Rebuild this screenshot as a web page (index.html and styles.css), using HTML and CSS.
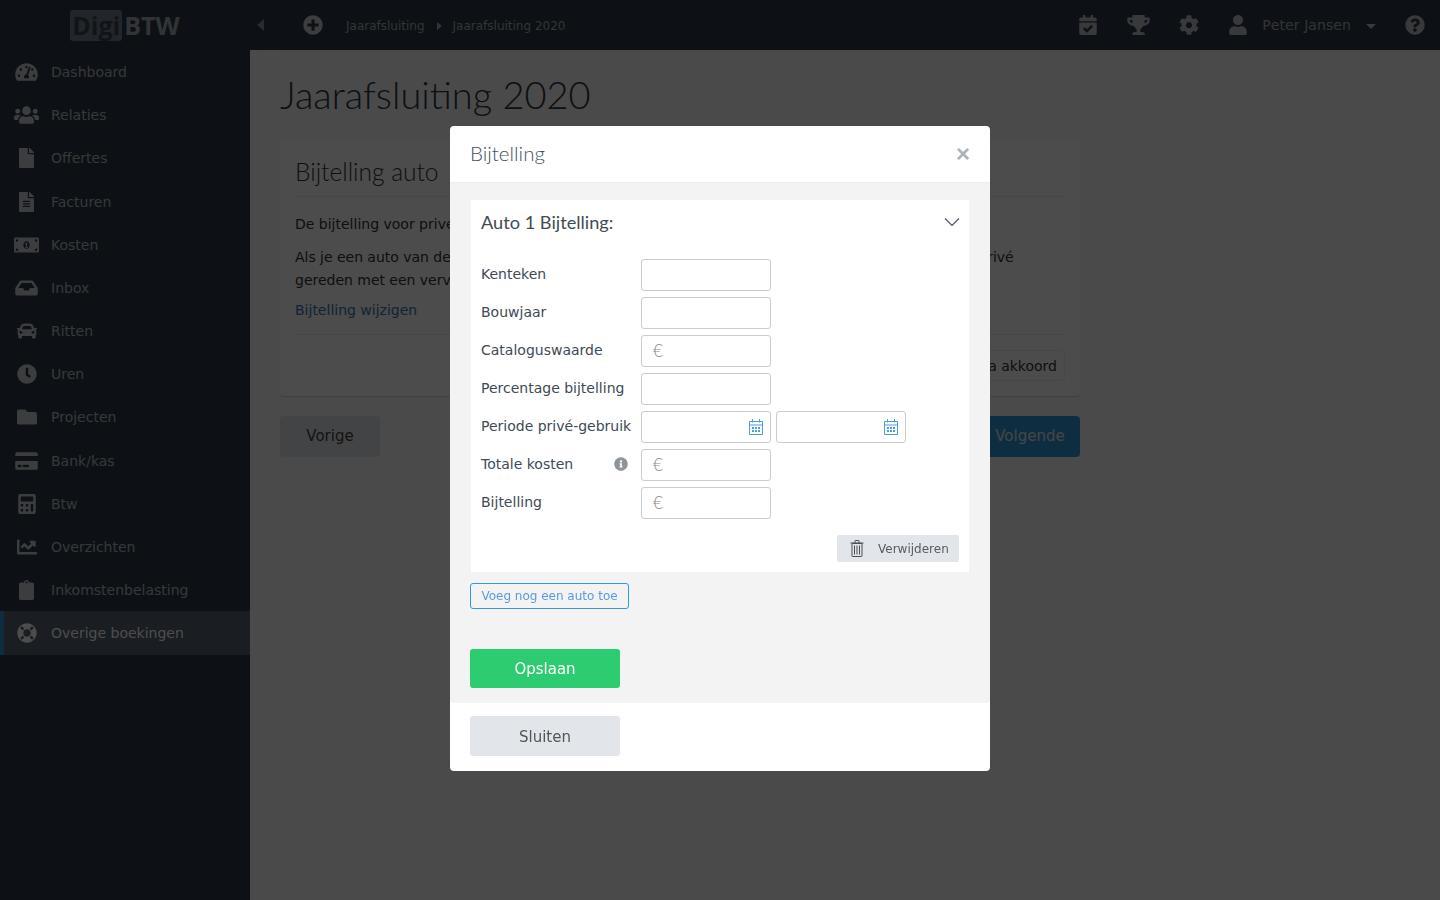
FILE: index.html
```
<!DOCTYPE html>
<html lang="nl">
<head>
<meta charset="utf-8">
<title>Jaarafsluiting 2020</title>
<link rel="stylesheet" href="styles.css">
</head>
<body>
<svg class="defs" width="0" height="0" aria-hidden="true">
<symbol id="i-tach" viewBox="0 0 576 512"><path d="M288 32C128.94 32 0 160.94 0 320c0 52.8 14.25 102.26 39.06 144.8 5.61 9.62 16.3 15.2 27.44 15.2h443c11.14 0 21.83-5.58 27.44-15.2C561.75 422.26 576 372.8 576 320c0-159.06-128.94-288-288-288zm0 64c14.71 0 26.58 10.13 30.32 23.65-1.11 2.26-2.64 4.23-3.45 6.67l-9.22 27.67c-5.13 3.49-10.97 6.01-17.64 6.01-17.67 0-32-14.33-32-32S270.33 96 288 96zM96 384c-17.67 0-32-14.33-32-32s14.33-32 32-32 32 14.33 32 32-14.33 32-32 32zm48-160c-17.67 0-32-14.33-32-32s14.33-32 32-32 32 14.33 32 32-14.33 32-32 32zm246.77-72.41l-61.33 184C343.13 347.33 352 364.54 352 384c0 11.72-3.38 22.55-8.88 32H232.88c-5.5-9.45-8.88-20.28-8.88-32 0-33.94 26.5-61.43 59.9-63.59l61.34-184.01c4.17-12.56 17.73-19.45 30.36-15.17 12.57 4.19 19.35 17.79 15.17 30.36zm14.66 57.2l15.52-46.55c3.47-1.29 7.13-2.23 11.05-2.23 17.67 0 32 14.33 32 32s-14.33 32-32 32c-11.38-.01-20.89-6.28-26.57-15.22zM480 384c-17.67 0-32-14.33-32-32s14.33-32 32-32 32 14.33 32 32-14.33 32-32 32z"/></symbol>
<symbol id="i-users" viewBox="0 0 640 512"><path d="M96 224c35.3 0 64-28.7 64-64s-28.7-64-64-64-64 28.7-64 64 28.7 64 64 64zm448 0c35.3 0 64-28.7 64-64s-28.7-64-64-64-64 28.7-64 64 28.7 64 64 64zm32 32h-64c-17.6 0-33.5 7.1-45.1 18.6 40.3 22.1 68.9 62 75.1 109.4h66c17.7 0 32-14.3 32-32v-32c0-35.3-28.7-64-64-64zm-256 0c61.9 0 112-50.1 112-112S381.9 32 320 32 208 82.1 208 144s50.1 112 112 112zm76.8 32h-8.3c-20.8 10-43.9 16-68.5 16s-47.6-6-68.5-16h-8.3C179.6 288 128 339.6 128 403.2V432c0 26.5 21.5 48 48 48h288c26.5 0 48-21.5 48-48v-28.8c0-63.6-51.6-115.2-115.2-115.2zm-223.7-13.4C161.5 263.1 145.6 256 128 256H64c-35.3 0-64 28.7-64 64v32c0 17.7 14.3 32 32 32h65.9c6.3-47.4 34.9-87.3 75.2-109.4z"/></symbol>
<symbol id="i-file" viewBox="0 0 384 512"><path d="M224 136V0H24C10.7 0 0 10.7 0 24v464c0 13.3 10.7 24 24 24h336c13.3 0 24-10.7 24-24V160H248c-13.2 0-24-10.8-24-24zm160-14.1v6.1H256V0h6.1c6.4 0 12.5 2.5 17 7l97.9 98c4.5 4.5 7 10.6 7 16.9z"/></symbol>
<symbol id="i-filealt" viewBox="0 0 384 512"><path d="M224 136V0H24C10.7 0 0 10.7 0 24v464c0 13.3 10.7 24 24 24h336c13.3 0 24-10.7 24-24V160H248c-13.2 0-24-10.8-24-24zm64 236c0 6.6-5.4 12-12 12H108c-6.6 0-12-5.4-12-12v-8c0-6.6 5.4-12 12-12h168c6.6 0 12 5.4 12 12v8zm0-64c0 6.6-5.4 12-12 12H108c-6.6 0-12-5.4-12-12v-8c0-6.6 5.4-12 12-12h168c6.6 0 12 5.4 12 12v8zm0-72v8c0 6.6-5.4 12-12 12H108c-6.6 0-12-5.4-12-12v-8c0-6.6 5.4-12 12-12h168c6.6 0 12 5.4 12 12zm96-114.1v6.1H256V0h6.1c6.4 0 12.5 2.5 17 7l97.9 98c4.5 4.5 7 10.6 7 16.9z"/></symbol>
<symbol id="i-money" viewBox="0 0 640 512"><path fill-rule="evenodd" d="M608 64H32C14.33 64 0 78.33 0 96v320c0 17.67 14.33 32 32 32h576c17.67 0 32-14.33 32-32V96c0-17.67-14.33-32-32-32zM48 400v-64c35.35 0 64 28.65 64 64H48zm0-224v-64h64c0 35.35-28.65 64-64 64zm272 176c-44.19 0-80-42.99-80-96 0-53.02 35.82-96 80-96s80 42.98 80 96c0 53.03-35.83 96-80 96zm272 48h-64c0-35.35 28.65-64 64-64v64zm0-224c-35.35 0-64-28.65-64-64h64v64z"/><path d="M304 192h32v112h24v24h-80v-24h24v-76h-24v-16c12 0 20-8 24-20z"/></symbol>
<symbol id="i-inbox" viewBox="0 0 576 512"><path d="M567.938 243.908L462.25 85.374A48.003 48.003 0 0 0 422.311 64H153.689a48 48 0 0 0-39.938 21.374L8.062 243.908A47.994 47.994 0 0 0 0 270.533V400c0 26.51 21.49 48 48 48h480c26.51 0 48-21.49 48-48V270.533a47.994 47.994 0 0 0-8.062-26.625zM162.252 128h251.497l85.333 128H376l-32 64H232l-32-64H76.918l85.334-128z"/></symbol>
<symbol id="i-car" viewBox="0 0 512 512"><path d="M499.99 176h-59.87l-16.64-41.6C406.38 91.63 365.57 64 319.5 64h-127c-46.06 0-86.88 27.63-103.99 70.4L71.87 176H12.01C4.2 176-1.53 183.34.37 190.91l6 24C7.7 220.25 12.5 224 18.01 224h20.07C24.65 235.73 16 252.78 16 272v48c0 16.12 6.16 30.67 16 41.93V416c0 17.67 14.33 32 32 32h32c17.67 0 32-14.33 32-32v-32h256v32c0 17.67 14.33 32 32 32h32c17.67 0 32-14.33 32-32v-54.07c9.84-11.25 16-25.8 16-41.93v-48c0-19.22-8.65-36.27-22.07-48H494c5.51 0 10.31-3.75 11.64-9.09l6-24c1.89-7.57-3.84-14.91-11.65-14.91zm-352.06-17.83c7.29-18.22 24.94-30.17 44.57-30.17h127c19.63 0 37.28 11.95 44.57 30.17L384 208H128l19.93-49.83zM96 319.8c-19.2 0-32-12.76-32-31.9S76.8 256 96 256s48 28.71 48 47.85-28.8 15.95-48 15.95zm320 0c-19.2 0-48 3.19-48-15.95S396.8 256 416 256s32 12.76 32 31.9-12.8 31.9-32 31.9z"/></symbol>
<symbol id="i-clock" viewBox="0 0 512 512"><path d="M256,8C119,8,8,119,8,256S119,504,256,504,504,393,504,256,393,8,256,8Zm92.49,313h0l-20,25a16,16,0,0,1-22.49,2.5h0l-67-49.72a40,40,0,0,1-15-31.23V112a16,16,0,0,1,16-16h32a16,16,0,0,1,16,16V256l58,42.5A16,16,0,0,1,348.49,321Z"/></symbol>
<symbol id="i-folder" viewBox="0 0 512 512"><path d="M464 128H272l-64-64H48C21.49 64 0 85.49 0 112v288c0 26.51 21.49 48 48 48h416c26.51 0 48-21.49 48-48V176c0-26.51-21.49-48-48-48z"/></symbol>
<symbol id="i-card" viewBox="0 0 576 512"><path d="M0 432c0 26.5 21.5 48 48 48h480c26.5 0 48-21.5 48-48V256H0v176zm192-68c0-6.6 5.4-12 12-12h136c6.6 0 12 5.4 12 12v40c0 6.6-5.4 12-12 12H204c-6.6 0-12-5.4-12-12v-40zm-128 0c0-6.6 5.4-12 12-12h72c6.6 0 12 5.4 12 12v40c0 6.6-5.4 12-12 12H76c-6.6 0-12-5.4-12-12v-40zM576 80v48H0V80c0-26.5 21.5-48 48-48h480c26.5 0 48 21.5 48 48z"/></symbol>
<symbol id="i-calc" viewBox="0 0 448 512"><path d="M400 0H48C22.4 0 0 22.4 0 48v416c0 25.6 22.4 48 48 48h352c25.6 0 48-22.4 48-48V48c0-25.6-22.4-48-48-48zM128 435c0 6.4-6.4 12.8-12.8 12.8H76.8c-6.4 0-12.8-6.4-12.8-12.8v-38.4c0-6.4 6.4-12.8 12.8-12.8h38.4c6.4 0 12.8 6.4 12.8 12.8V435zm0-128c0 6.4-6.4 12.8-12.8 12.8H76.8c-6.4 0-12.8-6.4-12.8-12.8v-38.4c0-6.4 6.4-12.8 12.8-12.8h38.4c6.4 0 12.8 6.4 12.8 12.8V307zm128 128c0 6.4-6.4 12.8-12.8 12.8h-38.4c-6.4 0-12.8-6.4-12.8-12.8v-38.4c0-6.4 6.4-12.8 12.8-12.8h38.4c6.4 0 12.8 6.4 12.8 12.8V435zm0-128c0 6.4-6.4 12.8-12.8 12.8h-38.4c-6.4 0-12.8-6.4-12.8-12.8v-38.4c0-6.4 6.4-12.8 12.8-12.8h38.4c6.4 0 12.8 6.4 12.8 12.8V307zm128 128c0 6.4-6.4 12.8-12.8 12.8h-38.4c-6.4 0-12.8-6.4-12.8-12.8V268.8c0-6.4 6.4-12.8 12.8-12.8h38.4c6.4 0 12.8 6.4 12.8 12.8V435zm0-256c0 6.4-6.4 12.8-12.8 12.8H76.8c-6.4 0-12.8-6.4-12.8-12.8V76.8C64 70.4 70.4 64 76.8 64h294.4c6.4 0 12.8 6.4 12.8 12.8V179z"/></symbol>
<symbol id="i-chart" viewBox="0 0 512 512"><path d="M496 384H64V80c0-8.84-7.16-16-16-16H16C7.16 64 0 71.16 0 80v336c0 17.67 14.33 32 32 32h464c8.84 0 16-7.16 16-16v-32c0-8.84-7.16-16-16-16zM464 96H345.94c-21.38 0-32.09 25.85-16.97 40.97l32.4 32.4L288 242.75l-73.37-73.37c-12.5-12.5-32.76-12.5-45.25 0l-68.69 68.69c-6.25 6.25-6.25 16.38 0 22.63l22.62 22.62c6.25 6.25 16.38 6.25 22.63 0L192 237.25l73.37 73.37c12.5 12.5 32.76 12.5 45.25 0l96-96 32.4 32.4c15.12 15.12 40.97 4.41 40.97-16.97V112c.01-8.84-7.15-16-16-16z"/></symbol>
<symbol id="i-clip" viewBox="0 0 384 512"><path d="M384 112v352c0 26.51-21.49 48-48 48H48c-26.51 0-48-21.49-48-48V112c0-26.51 21.49-48 48-48h80c0-35.29 28.71-64 64-64s64 28.71 64 64h80c26.51 0 48 21.49 48 48zM192 40c-13.255 0-24 10.745-24 24s10.745 24 24 24 24-10.745 24-24-10.745-24-24-24z"/></symbol>
<symbol id="i-ring" viewBox="0 0 512 512"><path d="M256 8C119.033 8 8 119.033 8 256s111.033 248 248 248 248-111.033 248-248S392.967 8 256 8zm173.696 119.559l-63.399 63.399c-10.987-18.559-26.67-34.252-45.255-45.255l63.399-63.399a218.396 218.396 0 0 1 45.255 45.255zM256 352c-53.019 0-96-42.981-96-96s42.981-96 96-96 96 42.981 96 96-42.981 96-96 96zM127.559 82.304l63.399 63.399c-18.559 10.987-34.252 26.67-45.255 45.255l-63.399-63.399a218.372 218.372 0 0 1 45.255-45.255zM82.304 384.441l63.399-63.399c10.987 18.559 26.67 34.252 45.255 45.255l-63.399 63.399a218.396 218.396 0 0 1-45.255-45.255zm302.137 45.255l-63.399-63.399c18.559-10.987 34.252-26.67 45.255-45.255l63.399 63.399a218.403 218.403 0 0 1-45.255 45.255z"/></symbol>
<symbol id="i-plus" viewBox="0 0 512 512"><path d="M256 8C119 8 8 119 8 256s111 248 248 248 248-111 248-248S393 8 256 8zm144 276c0 6.6-5.4 12-12 12h-92v92c0 6.6-5.4 12-12 12h-56c-6.6 0-12-5.4-12-12v-92h-92c-6.6 0-12-5.4-12-12v-56c0-6.6 5.4-12 12-12h92v-92c0-6.6 5.4-12 12-12h56c6.6 0 12 5.4 12 12v92h92c6.6 0 12 5.4 12 12v56z"/></symbol>
<symbol id="i-calcheck" viewBox="0 0 448 512"><path d="M436 160H12c-6.627 0-12-5.373-12-12v-36c0-26.51 21.49-48 48-48h48V12c0-6.627 5.373-12 12-12h40c6.627 0 12 5.373 12 12v52h128V12c0-6.627 5.373-12 12-12h40c6.627 0 12 5.373 12 12v52h48c26.51 0 48 21.49 48 48v36c0 6.627-5.373 12-12 12zM12 192h424c6.627 0 12 5.373 12 12v260c0 26.51-21.49 48-48 48H48c-26.51 0-48-21.49-48-48V204c0-6.627 5.373-12 12-12zm333.296 95.947l-28.169-28.398c-4.667-4.705-12.265-4.736-16.97-.068L194.12 364.665l-45.98-46.352c-4.667-4.705-12.266-4.736-16.971-.068l-28.397 28.17c-4.705 4.667-4.736 12.265-.068 16.97l82.601 83.269c4.667 4.705 12.265 4.736 16.97.068l142.953-141.805c4.705-4.667 4.736-12.265.068-16.97z"/></symbol>
<symbol id="i-trophy" viewBox="0 0 576 512"><path d="M552 64H448V24c0-13.3-10.7-24-24-24H152c-13.3 0-24 10.7-24 24v40H24C10.7 64 0 74.7 0 88v56c0 35.7 22.5 72.4 61.9 100.7 31.5 22.7 69.8 37.1 110 41.7C203.3 338.5 240 360 240 360v72h-48c-35.3 0-64 20.7-64 56v12c0 6.6 5.4 12 12 12h296c6.6 0 12-5.4 12-12v-12c0-35.3-28.7-56-64-56h-48v-72s36.7-21.5 68.1-73.6c40.3-4.6 78.6-19 110-41.7 39.3-28.3 61.9-65 61.9-100.7V88c0-13.3-10.7-24-24-24zM99.3 192.8C74.9 175.2 64 155.6 64 144v-16h64.2c1 32.6 5.8 61.2 12.8 86.2-15.1-5.2-29.2-12.4-41.7-21.4zM512 144c0 16.1-17.7 36.1-35.3 48.8-12.5 9-26.7 16.2-41.8 21.4 7-25 11.8-53.6 12.8-86.2H512v16z"/></symbol>
<symbol id="i-cog" viewBox="0 0 512 512"><path d="M487.4 315.7l-42.6-24.6c4.3-23.2 4.3-47 0-70.2l42.6-24.6c4.9-2.8 7.1-8.6 5.5-14-11.1-35.6-30-67.8-54.7-94.6-3.8-4.1-10-5.1-14.8-2.3L380.8 110c-17.9-15.4-38.5-27.3-60.8-35.1V25.8c0-5.6-3.9-10.5-9.4-11.7-36.7-8.2-74.3-7.8-109.2 0-5.5 1.2-9.4 6.1-9.4 11.7V75c-22.2 7.9-42.8 19.8-60.8 35.1L88.7 85.5c-4.9-2.8-11-1.9-14.8 2.3-24.7 26.7-43.6 58.9-54.7 94.6-1.7 5.4.6 11.2 5.5 14L67.3 221c-4.3 23.2-4.3 47 0 70.2l-42.6 24.6c-4.9 2.8-7.1 8.6-5.5 14 11.1 35.6 30 67.8 54.7 94.6 3.8 4.1 10 5.1 14.8 2.3l42.6-24.6c17.9 15.4 38.5 27.3 60.8 35.1v49.2c0 5.6 3.9 10.5 9.4 11.7 36.7 8.2 74.3 7.8 109.2 0 5.5-1.2 9.4-6.1 9.4-11.7v-49.2c22.2-7.9 42.8-19.8 60.8-35.1l42.6 24.6c4.9 2.8 11 1.9 14.8-2.3 24.7-26.7 43.6-58.9 54.7-94.6 1.5-5.5-.7-11.3-5.6-14.1zM256 336c-44.1 0-80-35.9-80-80s35.9-80 80-80 80 35.9 80 80-35.9 80-80 80z"/></symbol>
<symbol id="i-user" viewBox="0 0 448 512"><path d="M224 256c70.7 0 128-57.3 128-128S294.7 0 224 0 96 57.3 96 128s57.3 128 128 128zm89.6 32h-16.7c-22.2 10.2-46.9 16-72.9 16s-50.6-5.8-72.9-16h-16.7C60.2 288 0 348.2 0 422.4V464c0 26.5 21.5 48 48 48h352c26.5 0 48-21.5 48-48v-41.6c0-74.2-60.2-134.4-134.4-134.4z"/></symbol>
<symbol id="i-help" viewBox="0 0 512 512"><path d="M504 256c0 136.997-111.043 248-248 248S8 392.997 8 256C8 119.083 119.043 8 256 8s248 111.083 248 248zM262.655 90c-54.497 0-89.255 22.957-116.549 63.758-3.536 5.286-2.353 12.415 2.715 16.258l34.699 26.31c5.205 3.947 12.621 3.008 16.665-2.122 17.864-22.658 30.113-35.797 57.303-35.797 20.429 0 45.698 13.148 45.698 32.958 0 14.976-12.363 22.667-32.534 33.976C247.128 238.528 216 254.941 216 296v4c0 6.627 5.373 12 12 12h56c6.627 0 12-5.373 12-12v-1.333c0-28.462 83.186-29.647 83.186-106.667 0-58.002-60.165-102-116.531-102zM256 338c-25.365 0-46 20.635-46 46 0 25.364 20.635 46 46 46s46-20.636 46-46c0-25.365-20.635-46-46-46z"/></symbol>
<symbol id="i-info" viewBox="0 0 512 512"><path d="M256 8C119.043 8 8 119.083 8 256c0 136.997 111.043 248 248 248s248-111.003 248-248C504 119.083 392.957 8 256 8zm0 110c23.196 0 42 18.804 42 42s-18.804 42-42 42-42-18.804-42-42 18.804-42 42-42zm56 254c0 6.627-5.373 12-12 12h-88c-6.627 0-12-5.373-12-12v-24c0-6.627 5.373-12 12-12h12v-64h-12c-6.627 0-12-5.373-12-12v-24c0-6.627 5.373-12 12-12h64c6.627 0 12 5.373 12 12v100h12c6.627 0 12 5.373 12 12v24z"/></symbol>
<symbol id="i-date" viewBox="0 0 14 16"><path fill="none" stroke="currentColor" d="M.5 2.500h13v13H.5zM.5 6h13M3.500 0v3.500M10.500 0v3.500"/><path d="M3 8h2v2H3zM6 8h2v2H6zM9 8h2v2H9zM3 11h2v2H3zM6 11h2v2H6zM9 11h2v2H9z"/></symbol>
<symbol id="i-trash" viewBox="0 0 14 17"><path fill="none" stroke="currentColor" d="M2 3.500h10V16a.5.5 0 0 1-.5.5h-9A.5.5 0 0 1 2 16zM.5 3h13M5 3V1a.5.5 0 0 1 .5-.5h3A.5.5 0 0 1 9 1v2M4.500 5.500v9M7 5.500v9M9.500 5.500v9"/></symbol>
</svg>

<header class="topbar">
  <div class="brand">
    <span class="logo"><span class="logo-box">Digi</span>BTW</span>
  </div>
  <button class="toggle" type="button" aria-label="Menu inklappen"><span class="tri-left"></span></button>
  <svg class="ico plus"><use href="#i-plus"/></svg>
  <nav class="crumbs">
    <span>Jaarafsluiting</span>
    <span class="tri-right"></span>
    <span>Jaarafsluiting 2020</span>
  </nav>
  <div class="top-right">
    <svg class="ico t-cal"><use href="#i-calcheck"/></svg>
    <svg class="ico t-tro"><use href="#i-trophy"/></svg>
    <svg class="ico t-cog"><use href="#i-cog"/></svg>
    <svg class="ico t-usr"><use href="#i-user"/></svg>
    <span class="uname">Peter Jansen</span>
    <span class="tri-down"></span>
    <svg class="ico t-hlp"><use href="#i-help"/></svg>
  </div>
</header>

<div class="shell">
  <aside class="sidebar">
    <a class="nav"><span class="nav-ico"><svg class="ico n1"><use href="#i-tach"/></svg></span>Dashboard</a>
    <a class="nav"><span class="nav-ico"><svg class="ico n2"><use href="#i-users"/></svg></span>Relaties</a>
    <a class="nav"><span class="nav-ico"><svg class="ico n3"><use href="#i-file"/></svg></span>Offertes</a>
    <a class="nav"><span class="nav-ico"><svg class="ico n3"><use href="#i-filealt"/></svg></span>Facturen</a>
    <a class="nav"><span class="nav-ico"><svg class="ico n2"><use href="#i-money"/></svg></span>Kosten</a>
    <a class="nav"><span class="nav-ico"><svg class="ico n1"><use href="#i-inbox"/></svg></span>Inbox</a>
    <a class="nav"><span class="nav-ico"><svg class="ico n4"><use href="#i-car"/></svg></span>Ritten</a>
    <a class="nav"><span class="nav-ico"><svg class="ico n4"><use href="#i-clock"/></svg></span>Uren</a>
    <a class="nav"><span class="nav-ico"><svg class="ico n4"><use href="#i-folder"/></svg></span>Projecten</a>
    <a class="nav"><span class="nav-ico"><svg class="ico n1"><use href="#i-card"/></svg></span>Bank/kas</a>
    <a class="nav"><span class="nav-ico"><svg class="ico n5"><use href="#i-calc"/></svg></span>Btw</a>
    <a class="nav"><span class="nav-ico"><svg class="ico n4"><use href="#i-chart"/></svg></span>Overzichten</a>
    <a class="nav"><span class="nav-ico"><svg class="ico n3"><use href="#i-clip"/></svg></span>Inkomstenbelasting</a>
    <a class="nav active"><span class="nav-ico"><svg class="ico n4"><use href="#i-ring"/></svg></span>Overige boekingen</a>
  </aside>

  <main class="content">
    <h1 class="page-title">Jaarafsluiting 2020</h1>
    <section class="panel">
      <h2 class="panel-title">Bijtelling auto</h2>
      <div class="panel-body">
        <p class="p1">De bijtelling voor privégebruik van de auto van de zaak moet worden aangegeven.</p>
        <p class="p2">Als je een auto van de zaak hebt gehad en je hebt er al in dat jaar meer dan 500 kilometers mee privé gereden met een vervoersbewijs, dan moet je dit aangeven.</p>
        <a class="link">Bijtelling wijzigen</a>
      </div>
      <div class="panel-foot"><span class="btn-outline">Ik ga akkoord</span></div>
    </section>
    <div class="pager">
      <span class="btn btn-grey">Vorige</span>
      <span class="btn btn-blue">Volgende</span>
    </div>
  </main>
</div>

<div class="overlay"></div>

<div class="modal">
  <div class="modal-head">
    <span class="modal-title">Bijtelling</span>
    <span class="modal-close">×</span>
  </div>
  <div class="modal-body">
    <div class="car">
      <div class="car-head">
        <span class="car-title">Auto 1 Bijtelling:</span>
        <svg class="chev" viewBox="0 0 16 10"><path d="M1 1.500l7 7 7-7" fill="none" stroke="currentColor" stroke-width="1.200"/></svg>
      </div>
      <div class="rows">
        <div class="row"><label class="lbl">Kenteken</label><div class="inp"></div></div>
        <div class="row"><label class="lbl">Bouwjaar</label><div class="inp"></div></div>
        <div class="row"><label class="lbl">Cataloguswaarde</label><div class="inp"><span class="eur">€</span></div></div>
        <div class="row"><label class="lbl">Percentage bijtelling</label><div class="inp"></div></div>
        <div class="row"><label class="lbl">Periode privé-gebruik</label>
          <div class="inp inp-date"><svg class="date"><use href="#i-date"/></svg></div>
          <div class="inp inp-date"><svg class="date"><use href="#i-date"/></svg></div>
        </div>
        <div class="row"><label class="lbl lbl-info">Totale kosten<svg class="ico info"><use href="#i-info"/></svg></label><div class="inp"><span class="eur">€</span></div></div>
        <div class="row"><label class="lbl">Bijtelling</label><div class="inp"><span class="eur">€</span></div></div>
      </div>
      <div class="car-foot">
        <span class="btn-del"><svg class="trash"><use href="#i-trash"/></svg>Verwijderen</span>
      </div>
    </div>
    <span class="btn-add">Voeg nog een auto toe</span>
    <span class="btn-save">Opslaan</span>
  </div>
  <div class="modal-foot"><span class="btn-close">Sluiten</span></div>
</div>
</body>
</html>
```
FILE: styles.css
```
* { box-sizing: border-box; }
html, body { margin: 0; height: 100%; }
body {
  font-family: "DejaVu Sans", sans-serif;
  font-size: 14px;
  color: #333;
  background: #f7f7f7;
  overflow: hidden;
}
.defs { position: absolute; }
.ico { display: block; fill: currentColor; }

.topbar {
  height: 50px;
  background: #2c3a49;
  color: #b8bec4;
  display: flex;
  align-items: center;
}
.brand { width: 250px; display: flex; justify-content: center; }
.logo {
  font-family: "Open Sans", sans-serif;
  font-weight: 700;
  font-size: 25px;
  line-height: 31px;
  color: #a5adb5;
  display: flex;
}
.logo-box { background: #73808d; border-radius: 3px; padding: 0 2px; margin-right: 2px; color: #3a4654; }
.toggle {
  width: 25px; height: 50px; padding: 0 0 0 7px; border: 0;
  background: transparent;
  border-right: 1px solid #34424f;
  border-bottom-right-radius: 6px;
  display: flex; align-items: center;
}
.tri-left { width: 0; height: 0; border: 6px solid transparent; border-left-width: 0; border-right: 7px solid #8a939c; }
.plus { width: 20px; height: 20px; margin-left: 28px; color: #c6ccd2; }
.crumbs { display: flex; align-items: center; font-size: 12px; font-kerning: none; margin-left: 23px; padding-top: 1px; color: #a8aeb4; }
.tri-right { width: 0; height: 0; margin: 0 11px 0 12px; border: 4px solid transparent; border-right-width: 0; border-left: 5px solid #a8aeb4; }
.top-right { margin-left: auto; display: flex; align-items: center; color: #b8bec4; }
.t-cal { width: 18px; height: 20px; margin-right: 30px; }
.t-tro { width: 23px; height: 20px; margin-right: 29px; }
.t-cog { width: 20px; height: 20px; margin-right: 30px; }
.t-usr { width: 18px; height: 20px; margin-right: 15px; }
.uname { font-size: 14px; font-kerning: none; letter-spacing: 0.08px; color: #a8aeb4; }
.tri-down { width: 0; height: 0; margin: 2px 29px 0 15px; border: 5px solid transparent; border-bottom-width: 0; border-top: 5px solid #b8bec4; }
.t-hlp { width: 20px; height: 20px; margin-right: 15px; }

.shell { display: flex; height: 850px; }
.sidebar { width: 250px; flex: none; background: #2c3a49; padding-top: 0.5px; }
.nav {
  height: 43.18px;
  display: flex;
  align-items: center;
  color: #b6bcc2;
  font-size: 14px;
}
.nav-ico { width: 51px; flex: none; display: flex; justify-content: center; padding-left: 2px; color: #c6ccd2; }
.n1 { width: 23px; height: 20px; }
.n2 { width: 25px; height: 20px; }
.n3 { width: 15px; height: 20px; }
.n4 { width: 20px; height: 20px; }
.n5 { width: 18px; height: 20px; }
.active { background: #57626f; box-shadow: inset 4px 0 0 #3498db; color: #fff; height: 44px; margin-top: -1px; padding-top: 1px; }
.active .nav-ico { color: #fff; }

.content { flex: 1; padding: 0 30px; }
.page-title {
  margin: 0;
  padding-top: 22px;
  height: 91px;
  font-family: Lato, sans-serif;
  font-weight: 300;
  font-size: 38px;
  line-height: 44px;
  color: #2a3642;
}
.panel {
  width: 800px;
  height: 255px;
  background: #fff;
  border-radius: 4px;
  box-shadow: 0 1px 1px rgba(0,0,0,.15);
  padding: 0 15px;
  display: flex;
  flex-direction: column;
}
.panel-title {
  margin: 0;
  height: 56px;
  padding-top: 15px;
  border-bottom: 1px solid #eee;
  font-family: Lato, sans-serif;
  font-weight: 300;
  font-size: 24.5px;
  line-height: 32px;
  color: #2a3642;
}
.panel-body { height: 137px; padding-top: 16px; line-height: 23px; color: #333; }
.panel-body p { margin: 0; }
.p1 { white-space: nowrap; overflow: hidden; height: 23px; margin-bottom: 10px !important; }
.p2 { width: 725px; word-spacing: -0.12px; }
.link { display: block; margin-top: 7px; color: #3b78b5; }
.panel-foot { border-top: 1px solid #eee; padding-top: 15px; display: flex; justify-content: flex-end; }
.btn-outline {
  height: 31px; padding: 0 7px; line-height: 31px;
  border: 1px solid #eee; border-radius: 3px; color: #333;
}
.pager { margin-top: 20px; width: 800px; display: flex; justify-content: space-between; }
.btn { width: 100px; height: 41px; padding-bottom: 2px; border-radius: 4px; display: flex; align-items: center; justify-content: center; font-size: 15px; }
.btn-grey { background: #e2e5ea; color: #444; }
.btn-blue { background: #3498db; color: #e6e8ea; }

.overlay { position: fixed; inset: 0; background: rgba(0,0,0,.7); }

.modal {
  position: fixed;
  top: 126px;
  left: 450px;
  width: 540px;
  height: 645px;
  background: #fff;
  border-radius: 4px;
  color: #333;
  display: flex;
  flex-direction: column;
}
.modal-head {
  height: 57px;
  padding: 0 20px;
  display: flex;
  align-items: center;
  justify-content: space-between;
  border-bottom: 1px solid #eee;
}
.modal-title { font-family: Lato, sans-serif; font-weight: 300; font-size: 20.5px; color: #3f5166; margin-top: -2px; }
.modal-close { font-family: "Liberation Sans", sans-serif; font-weight: 700; font-size: 24px; line-height: 24px; color: #aeb4ba; width: 14px; text-align: center; }
.modal-body {
  height: 520px;
  background: #f3f3f3;
  padding: 17px 20px 0;
  border-radius: 0 0 3px 3px;
  display: flex;
  flex-direction: column;
  align-items: flex-start;
}
.car { width: 500px; height: 372px; background: #fff; padding: 0 10px; border: 1px solid #f3f3f3; border-width: 0 1px; }
.car-head { height: 59px; display: flex; align-items: center; justify-content: space-between; padding: 0 0 16px; }
.car-title { font-family: Lato, sans-serif; font-weight: 400; font-size: 18.2px; color: #434b54; }
.chev { width: 16px; height: 10px; color: #4a5560; margin-right: -1px; }
.rows { display: flex; flex-direction: column; gap: 6px; }
.row { display: flex; align-items: center; height: 32px; gap: 5px; }
.lbl { width: 155px; flex: none; color: #3e4a56; margin-top: -2px; }
.lbl-info { display: flex; align-items: center; justify-content: space-between; padding-right: 8px; }
.info { width: 14px; height: 14px; color: #8f9498; }
.inp {
  width: 130px; height: 32px;
  border: 1px solid #ccc;
  border-radius: 3px;
  background: #fff;
  display: flex;
  align-items: center;
  padding: 0 11px;
}
.inp-date { justify-content: flex-end; padding-right: 7px; }
.eur { font-family: Lato, sans-serif; font-weight: 300; color: #8a8a8a; font-size: 17px; margin-top: -1px; }
.date { width: 14px; height: 16px; color: #4a9be0; fill: #4a9be0; }
.car-foot { display: flex; justify-content: flex-end; margin-top: 16px; }
.btn-del {
  width: 122px; height: 27px;
  background: #e2e5ea;
  border-radius: 2px;
  font-size: 12px;
  color: #555c66;
  display: flex;
  align-items: center;
  padding-left: 13px;
}
.trash { width: 14px; height: 17px; margin-right: 14px; color: #4a4f55; }
.btn-add {
  margin-top: 11px;
  height: 26px;
  width: 159px;
  border: 1px solid #3498db;
  border-radius: 3px;
  font-size: 12px;
  line-height: 24px;
  text-align: center;
  color: #5a9be0;
}
.btn-save {
  margin-top: 40px;
  width: 150px; height: 39px;
  background: #2ecc71;
  border-radius: 3px;
  color: #fff;
  font-size: 15px;
  display: flex; align-items: center; justify-content: center;
}
.modal-foot { flex: 1; padding: 13px 20px 0; }
.btn-close {
  width: 150px; height: 40px;
  padding-top: 2px;
  background: #e2e5ea;
  border-radius: 3px;
  color: #555;
  font-size: 15px;
  display: flex; align-items: center; justify-content: center;
}
```
